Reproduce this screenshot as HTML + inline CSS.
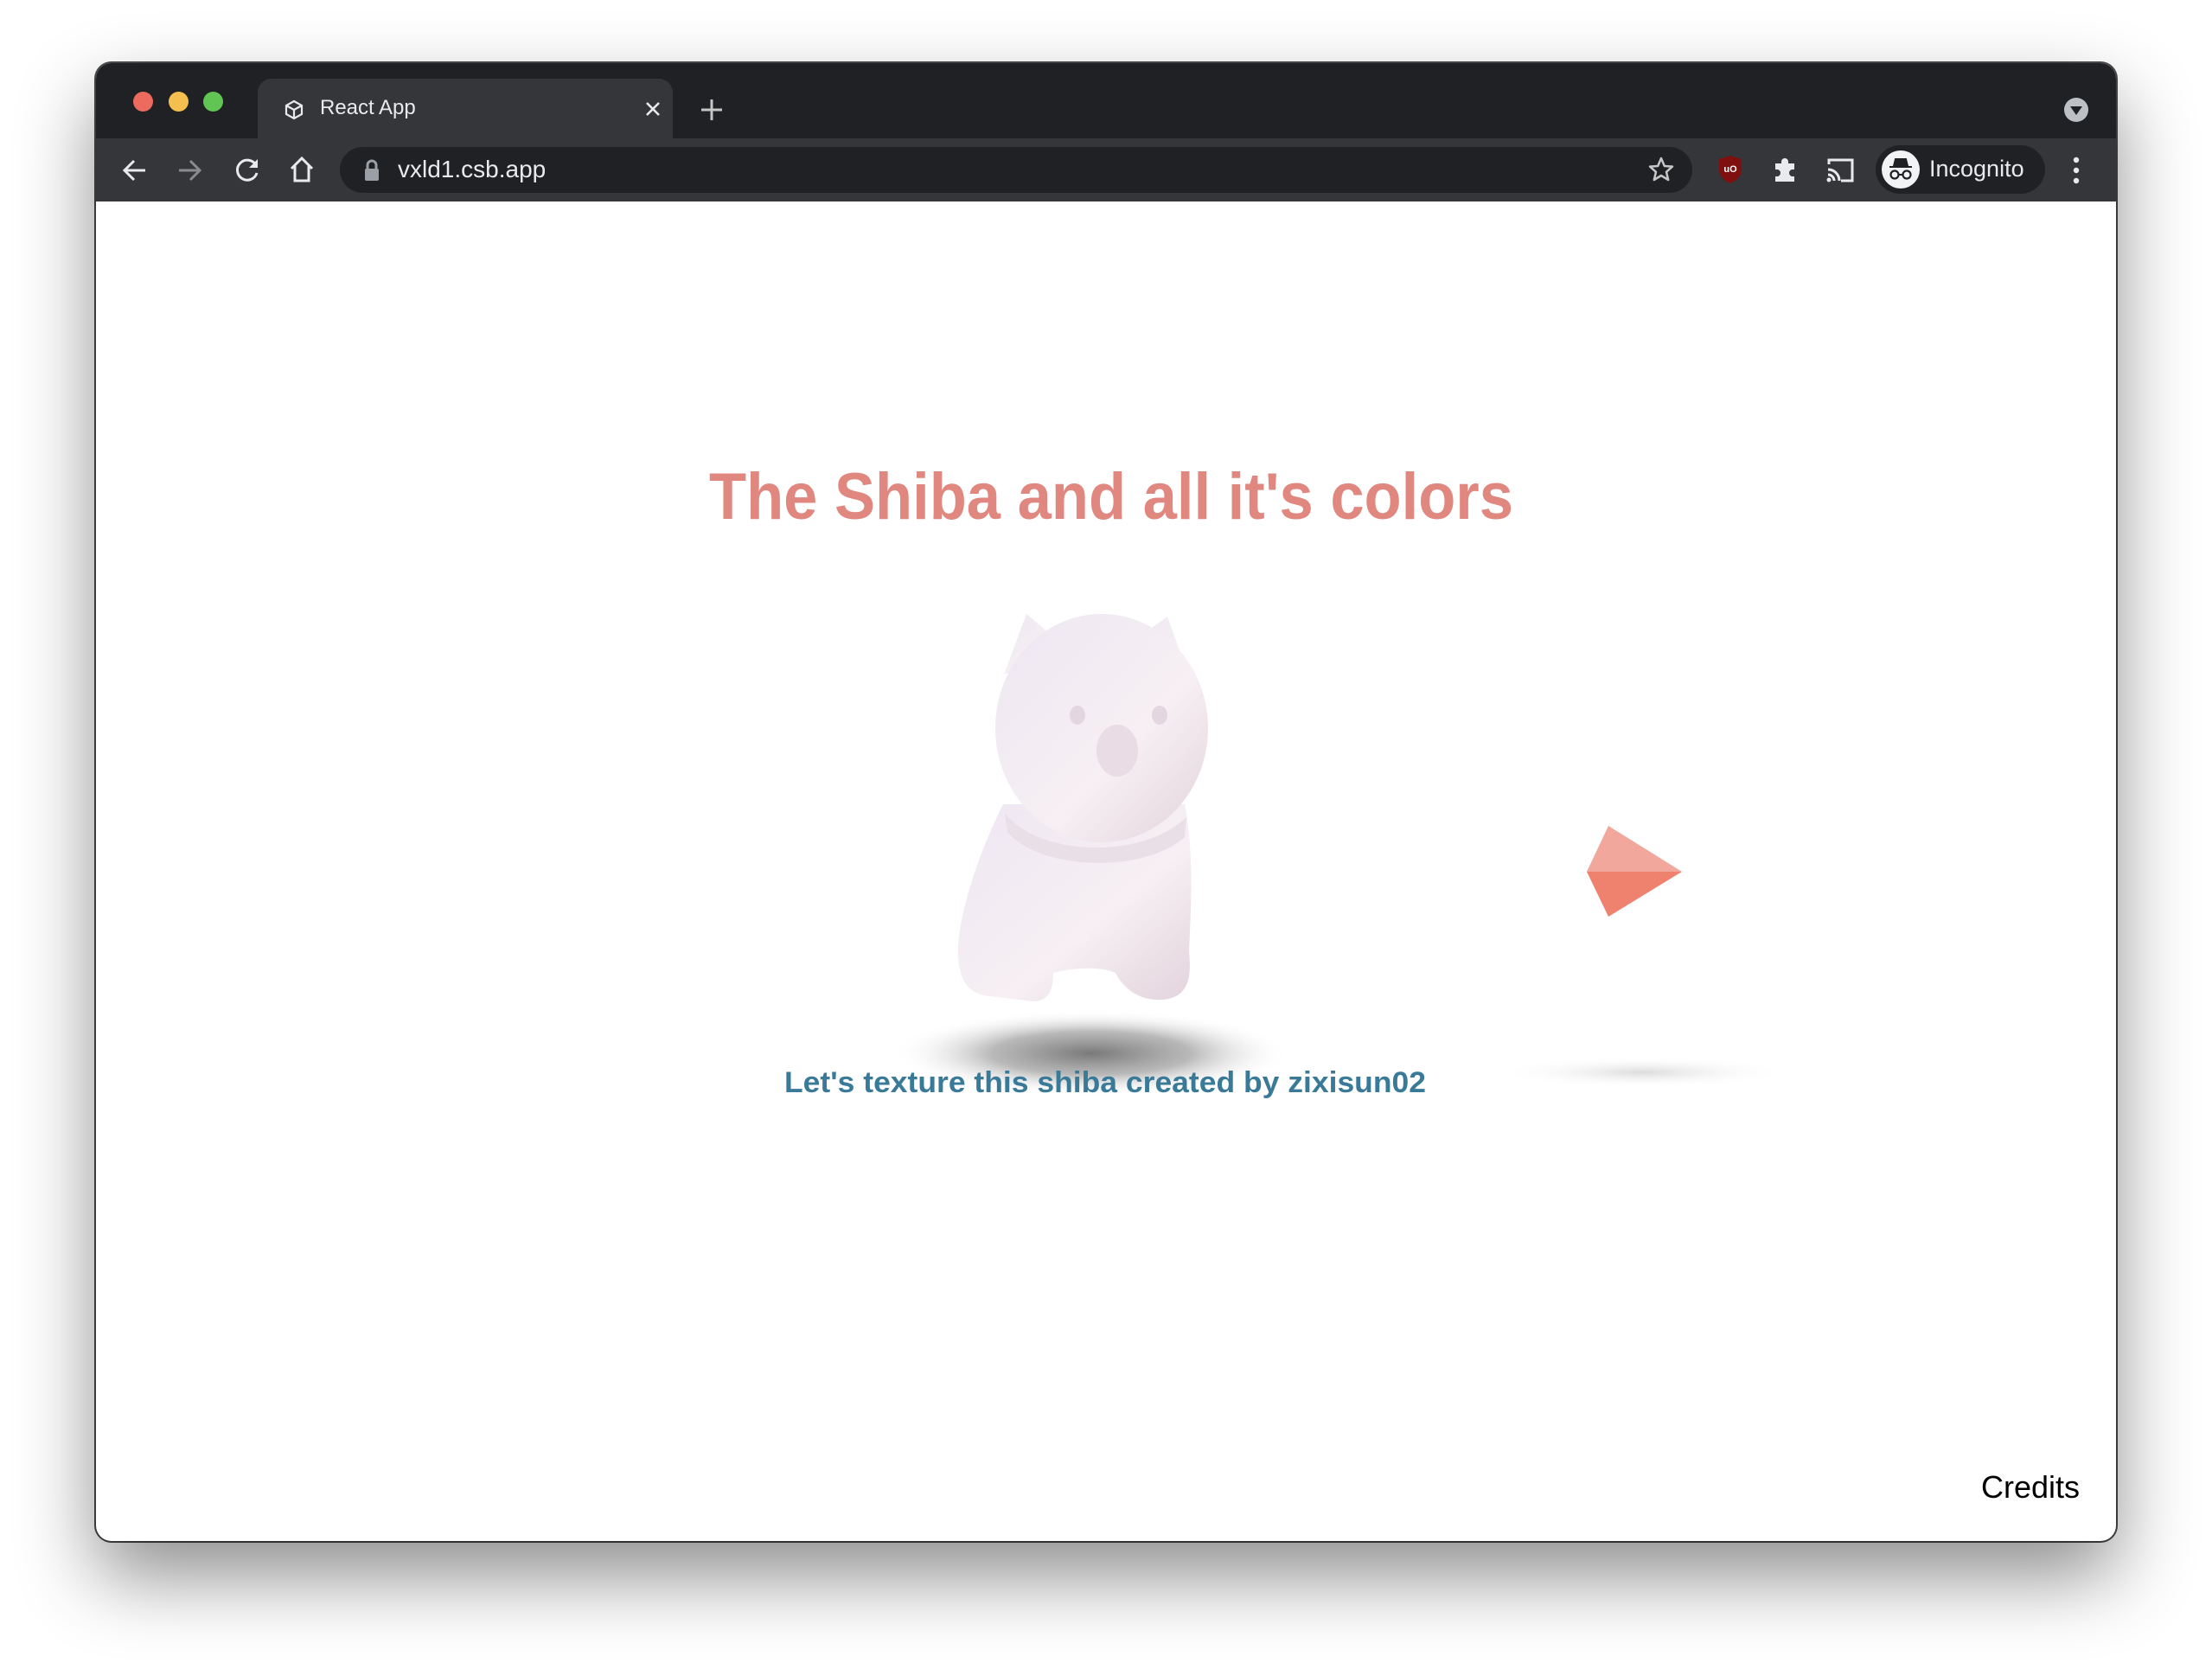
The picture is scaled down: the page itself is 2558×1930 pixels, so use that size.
<!DOCTYPE html>
<html><head><meta charset="utf-8">
<style>
html,body{margin:0;padding:0;width:2558px;height:1930px;overflow:hidden;background:#fff;font-family:"Liberation Sans",sans-serif}
.win{position:absolute;left:111px;top:73px;width:2336px;height:1709px;border-radius:18px;overflow:hidden;background:#fff;box-shadow:0 40px 90px rgba(0,0,0,.45),0 0 0 2px #4a4a4a;}
.tabbar{position:absolute;left:0;top:0;width:100%;height:87px;background:#202124}
.toolbar{position:absolute;left:0;top:87px;width:100%;height:73px;background:#35363a}
.tab{position:absolute;left:187px;top:18px;width:480px;height:69px;background:#35363a;border-radius:16px 16px 0 0}
.dot{position:absolute;top:33px;width:23px;height:23px;border-radius:50%}
.omni{position:absolute;left:282px;top:10px;width:1564px;height:53px;border-radius:27px;background:#202124}
.pill{position:absolute;left:2058px;top:8px;width:196px;height:56px;border-radius:28px;background:#202124}
svg{position:absolute}
</style></head><body>
<div class="win">
 <div class="tabbar">
  <div class="dot" style="left:43px;background:#ed6a5e"></div>
  <div class="dot" style="left:84px;background:#f5bf4f"></div>
  <div class="dot" style="left:124px;background:#61c554"></div>
  <div class="tab">
   <svg style="left:30px;top:24px" width="24" height="24" viewBox="0 0 24 24"><path d="M12 2 L21 7 V17 L12 22 L3 17 V7 Z M3 7 L12 12 L21 7 M12 12 V22" fill="none" stroke="#e8eaed" stroke-width="2.2"/></svg>
   <div style="position:absolute;left:72px;top:20px;color:#e8eaed;font-size:24px">React App</div>
   <svg style="left:447px;top:25px" width="20" height="20" viewBox="0 0 20 20"><path d="M3 3 L17 17 M17 3 L3 17" stroke="#e8eaed" stroke-width="2.6"/></svg>
  </div>
  <svg style="left:699px;top:41px" width="26" height="26" viewBox="0 0 26 26"><path d="M13 1 V25 M1 13 H25" stroke="#c4c7c5" stroke-width="3"/></svg>
  <svg style="left:2276px;top:40px" width="28" height="28" viewBox="0 0 28 28"><circle cx="14" cy="14" r="14" fill="#bdc1c6"/><path d="M7 10 H21 L14 20 Z" fill="#202124"/></svg>
 </div>
 <div class="toolbar">
  <svg style="left:30px;top:22px" width="30" height="30" viewBox="0 0 30 30"><path d="M27 15 H4 M14 4 L3 15 L14 26" fill="none" stroke="#e8eaed" stroke-width="3"/></svg>
  <svg style="left:93px;top:22px" width="30" height="30" viewBox="0 0 30 30"><path d="M3 15 H26 M16 4 L27 15 L16 26" fill="none" stroke="#8a8b8e" stroke-width="3"/></svg>
  <svg style="left:159px;top:21px" width="32" height="32" viewBox="0 0 32 32"><path d="M26 10 A11.5 11.5 0 1 0 27 19" fill="none" stroke="#e8eaed" stroke-width="3"/><path d="M28 3 V13 H18 Z" fill="#e8eaed"/></svg>
  <svg style="left:222px;top:20px" width="32" height="32" viewBox="0 0 32 32"><path d="M4 15 L16 3 L28 15 M8 12 V29 H24 V12" fill="none" stroke="#e8eaed" stroke-width="3"/></svg>
  <div class="omni">
   <svg style="left:27px;top:14px" width="20" height="26" viewBox="0 0 20 26"><rect x="2" y="11" width="16" height="14" rx="2" fill="#9aa0a6"/><path d="M5 12 V7 A5 5 0 0 1 15 7 V12" fill="none" stroke="#9aa0a6" stroke-width="3"/></svg>
   <div style="position:absolute;left:67px;top:10px;color:#e8eaed;font-size:28px">vxld1.csb.app</div>
   <svg style="left:1512px;top:10px" width="32" height="32" viewBox="0 0 32 32"><path d="M16 3 L19.8 12 L29 12.6 L22 18.8 L24.2 28 L16 23 L7.8 28 L10 18.8 L3 12.6 L12.2 12 Z" fill="none" stroke="#c4c7c5" stroke-width="2.5" stroke-linejoin="round"/></svg>
  </div>
  <svg style="left:1875px;top:19px" width="30" height="34" viewBox="0 0 30 34"><path d="M15 1 L28 5 V17 C28 25 22 30 15 33 C8 30 2 25 2 17 V5 Z" fill="#800f0f"/><text x="15" y="20" font-size="11" font-weight="bold" fill="#fff" text-anchor="middle" font-family="Liberation Sans">uO</text></svg>
  <svg style="left:1938px;top:20px" width="32" height="32" viewBox="0 0 32 32"><path d="M4 9 H11 V7 A4 4 0 0 1 19 7 V9 H26 V16 H24 A4 4 0 0 0 24 24 H26 V30 H4 V24 H6 A4 4 0 0 0 6 16 H4 Z" fill="#e8eaed"/></svg>
  <svg style="left:2000px;top:22px" width="34" height="30" viewBox="0 0 34 30"><path d="M4 8 V3 H31 V27 H18" fill="none" stroke="#e8eaed" stroke-width="3"/><path d="M3 14 A13 13 0 0 1 16 27 M3 20 A7 7 0 0 1 10 27" fill="none" stroke="#e8eaed" stroke-width="3"/><circle cx="4" cy="26" r="2.5" fill="#e8eaed"/></svg>
  <div class="pill">
   <svg style="left:6px;top:5px" width="46" height="46" viewBox="0 0 46 46"><circle cx="23" cy="23" r="22" fill="#f1f3f4"/><path d="M15 19 L17 11 H29 L31 19 Z M10 20 H36" stroke="#202124" fill="#202124" stroke-width="2"/><circle cx="16" cy="29" r="4.5" fill="none" stroke="#202124" stroke-width="2.2"/><circle cx="30" cy="29" r="4.5" fill="none" stroke="#202124" stroke-width="2.2"/><path d="M20 29 H26" stroke="#202124" stroke-width="2"/></svg>
   <div style="position:absolute;left:62px;top:12px;color:#e8eaed;font-size:27px">Incognito</div>
  </div>
  <svg style="left:2284px;top:20px" width="12" height="34" viewBox="0 0 12 34"><circle cx="6" cy="5" r="3.2" fill="#e8eaed"/><circle cx="6" cy="17" r="3.2" fill="#e8eaed"/><circle cx="6" cy="29" r="3.2" fill="#e8eaed"/></svg>
 </div>
 <svg style="left:-111px;top:-73px" width="2558" height="1930" viewBox="0 0 2558 1930">
  <defs>
   <radialGradient id="sh" cx="50%" cy="50%" r="50%"><stop offset="0" stop-color="#6a6a6a" stop-opacity=".9"/><stop offset=".5" stop-color="#8a8a8a" stop-opacity=".6"/><stop offset="1" stop-color="#fff" stop-opacity="0"/></radialGradient>
   <radialGradient id="sh2" cx="50%" cy="50%" r="50%"><stop offset="0" stop-color="#ccc" stop-opacity=".7"/><stop offset="1" stop-color="#fff" stop-opacity="0"/></radialGradient>
   <linearGradient id="dog" x1="0" y1="0" x2="1" y2="1"><stop offset="0" stop-color="#eee7f3"/><stop offset=".6" stop-color="#f6eff3"/><stop offset="1" stop-color="#e3d3dc"/></linearGradient>
  </defs>
  <ellipse cx="1262" cy="1218" rx="230" ry="50" fill="url(#sh)"/>
  <ellipse cx="1900" cy="1240" rx="170" ry="18" fill="url(#sh2)"/>
  <text x="1285" y="600" text-anchor="middle" font-family="Liberation Sans" font-weight="bold" font-size="76" fill="#e0877f" textLength="930" lengthAdjust="spacingAndGlyphs">The Shiba and all it's colors</text>
  <text x="1278" y="1263" text-anchor="middle" font-family="Liberation Sans" font-weight="bold" font-size="34" fill="#3a7a99" textLength="742" lengthAdjust="spacingAndGlyphs">Let's texture this shiba created by zixisun02</text>
  <text x="2405" y="1732" text-anchor="end" font-family="Liberation Sans" font-size="36" fill="#000">Credits</text>
  <g fill="url(#dog)">
   <path d="M1161 780 L1187 710 L1240 755 Z"/>
   <path d="M1305 745 L1350 713 L1387 815 Z"/>
   <path d="M1160 930 C1130 990 1108 1060 1108 1100 C1108 1140 1125 1150 1145 1152 L1195 1158 C1215 1158 1218 1140 1218 1125 C1245 1118 1275 1118 1290 1125 C1300 1145 1320 1158 1345 1156 C1375 1153 1378 1130 1375 1100 C1378 1040 1380 980 1370 930 Z"/>
   <ellipse cx="1274" cy="842" rx="123" ry="132"/>
  </g>
  <path d="M1162 940 C1200 990 1320 995 1372 945 L1370 968 C1320 1012 1200 1005 1165 962 Z" fill="#e9dfe6"/>
  <ellipse cx="1246" cy="827" rx="9" ry="11" fill="#e3d6e1"/>
  <ellipse cx="1341" cy="827" rx="9" ry="11" fill="#e3d6e1"/>
  <ellipse cx="1292" cy="868" rx="24" ry="30" fill="#e9dce4"/>
  <path d="M1835 1008 L1860 955 L1945 1008 Z" fill="#f1a79c"/>
  <path d="M1835 1008 L1945 1008 L1860 1060 Z" fill="#ef826e"/>
 </svg>
</div>
</body></html>
